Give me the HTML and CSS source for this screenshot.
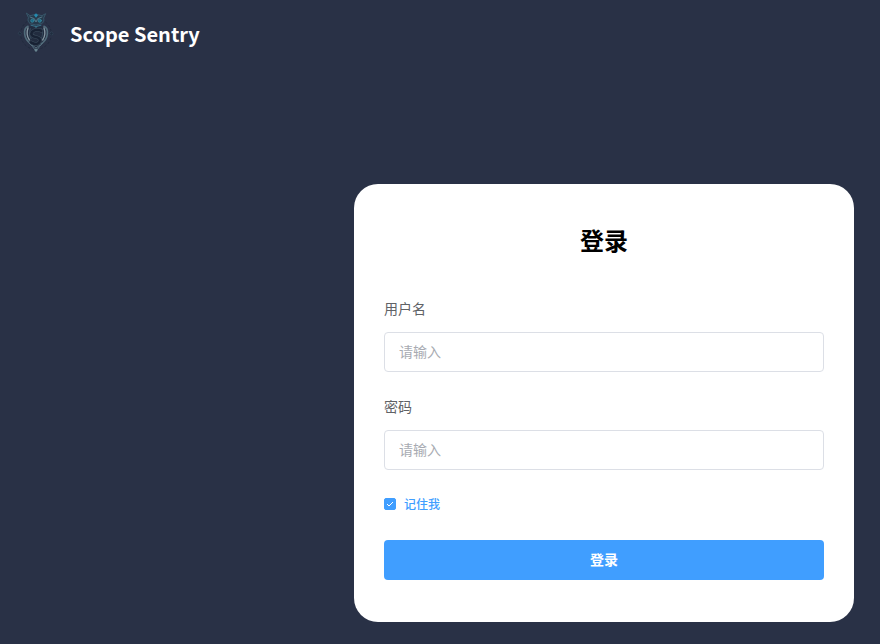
FILE: index.html
```html
<!DOCTYPE html>
<html lang="zh-CN">
<head>
<meta charset="utf-8">
<meta name="viewport" content="width=device-width, initial-scale=1">
<title>Scope Sentry</title>
<link rel="stylesheet" href="styles.css">
</head>
<body>
<header class="header">
  <svg class="logo" viewBox="0 0 120 126" fill="none" stroke-linecap="round" stroke-linejoin="round" aria-hidden="true">
    <circle cx="60" cy="66" r="46" stroke="#202a3d" stroke-width="3" stroke-dasharray="5 8"/>
    <path d="M38 46 60 36 82 46 86 80 60 112 34 80Z" fill="#222c3f"/>
    <path d="M32 4 42 11Q60 3 78 11L89 5 83 18Q86 31 76 35L60 39 43 35Q33 29 37 18Z" fill="#26394b" stroke="#38566a" stroke-width="3"/>
    <path d="M42 15 55 20 60 30 65 20 78 15" stroke="#56798a" stroke-width="3"/>
    <path d="M60 4 66 10 60 17 54 10Z" fill="#258bb0"/>
    <circle cx="49" cy="26" r="5" fill="#1d6984" stroke="#3c8ba1" stroke-width="2"/>
    <circle cx="71" cy="26" r="5" fill="#1d6984" stroke="#3c8ba1" stroke-width="2"/>
    <path d="M45 40Q60 48 75 40M58 42 60 47 63 42" stroke="#38738a" stroke-width="3"/>
    <path d="M36 43Q24 48 26 66 28 85 45 96M84 43Q96 48 94 66 92 85 75 96" stroke="#506b7a" stroke-width="5"/>
    <path d="M36 48Q29 68 40 84M84 48Q91 68 80 84" stroke="#8496a1" stroke-width="4"/>
    <path d="M43 50Q36 68 45 80M77 50Q84 68 75 80" stroke="#405869" stroke-width="2"/>
    <path d="M76 56Q58 49 48 60 41 72 60 75 77 79 70 91 61 101 45 91" stroke="#3d4d5d" stroke-width="11"/>
    <path d="M76 56Q58 49 48 60 41 72 60 75 77 79 70 91 61 101 45 91" stroke="#182234" stroke-width="8"/>
    <path d="M39 93 49 103 60 118 71 103 81 93M49 100 60 108 71 100" stroke="#526c7b" stroke-width="3"/>
    <path d="M60 109 65 114 60 120 55 114Z" fill="#6a8591"/>
    <path d="M12 60 17 65 12 70 7 65ZM107 60 112 65 107 70 102 65Z" fill="#1f2c3e" stroke="#34495a" stroke-width="2"/>
  </svg>
  <span class="brand">Scope Sentry</span>
</header>
<main class="main">
  <form class="card">
    <h1 class="title">登录</h1>
    <div class="field">
      <label class="label" for="username">用户名</label>
      <input class="input" id="username" type="text" placeholder="请输入">
    </div>
    <div class="field">
      <label class="label" for="password">密码</label>
      <input class="input" id="password" type="password" placeholder="请输入">
    </div>
    <label class="remember">
      <span class="box">
        <input class="check" type="checkbox" checked>
        <svg class="tick" viewBox="0 0 12 12" fill="none" stroke="#fff" aria-hidden="true"><path d="M3 6 5 8 9 4"/></svg>
      </span>
      记住我
    </label>
    <button class="submit" type="button">登录</button>
  </form>
</main>
</body>
</html>
```
FILE: styles.css
```css
* {
  box-sizing: border-box;
}

body {
  margin: 0;
  min-height: 100vh;
  display: flex;
  flex-direction: column;
  background: #293146;
  font-family: "Noto Sans CJK SC", sans-serif;
  font-size: 14px;
}

.header {
  display: flex;
  align-items: flex-start;
  gap: 14px;
  padding: 12px 16px;
}

.logo {
  width: 40px;
  height: 42px;
}

.brand {
  color: #fff;
  font-size: 20px;
  font-weight: 700;
  line-height: 44px;
}

.main {
  flex: 1;
  display: flex;
  justify-content: flex-end;
  align-items: flex-end;
  padding: 22px 26px;
}

.card {
  display: flex;
  flex-direction: column;
  width: 100%;
  max-width: 500px;
  padding: 40px 30px 42px;
  border-radius: 24px;
  background: #fff;
}

.title {
  margin: 0 0 41px;
  color: #000;
  font-size: 24px;
  font-weight: 700;
  line-height: 32px;
  text-align: center;
}

.field {
  display: flex;
  flex-direction: column;
  gap: 13px;
  margin-bottom: 23px;
}

.label {
  color: #606266;
  line-height: 22px;
}

.input {
  width: 100%;
  height: 40px;
  padding: 0 14px 2px;
  border: 1px solid #dcdfe6;
  border-radius: 4px;
  background: #fff;
  color: #606266;
  font: inherit;
}

.input::placeholder {
  color: #a8abb2;
}

.remember {
  display: flex;
  align-items: center;
  gap: 8px;
  align-self: flex-start;
  margin-bottom: 25px;
  color: #409eff;
  font-size: 12px;
  font-weight: 500;
  line-height: 22px;
}

.box {
  display: grid;
}

.check,
.tick {
  grid-area: 1 / 1;
  width: 12px;
  height: 12px;
}

.check {
  appearance: none;
  margin: 0;
  border: 1px solid #409eff;
  border-radius: 2px;
}

.check:checked {
  background: #409eff;
}

.tick {
  pointer-events: none;
}

.check:not(:checked) + .tick {
  visibility: hidden;
}

.submit {
  height: 40px;
  padding: 0 16px 2px;
  border: 0;
  border-radius: 4px;
  background: #409eff;
  color: #fff;
  font: inherit;
  font-weight: 700;
}
```
